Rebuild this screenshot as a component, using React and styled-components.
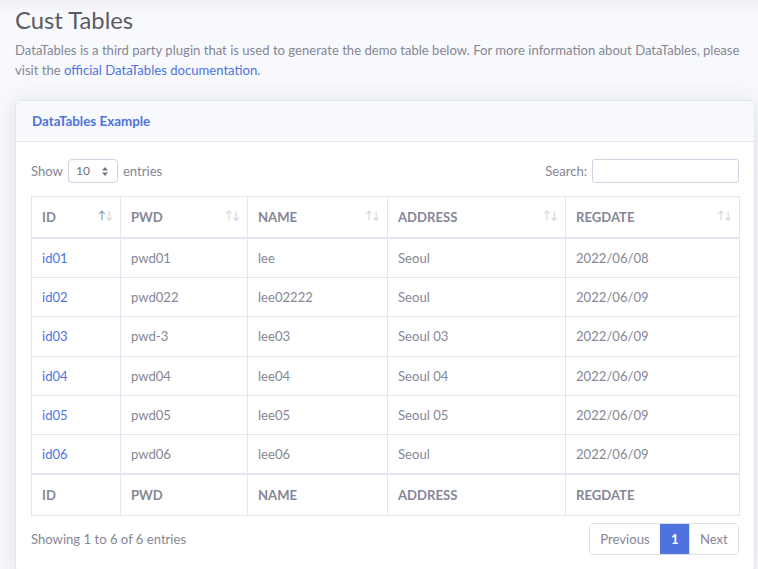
import styled, { createGlobalStyle } from "styled-components";

const GlobalStyle = createGlobalStyle`
    html, body {
        margin: 0;
        padding: 0;
        background: #f8f9fc;
    }
    body {
        font-family: Lato, 'Noto Sans', sans-serif;
        font-size: 13.1px;
        line-height: 20.4px;
        color: #858796;
    }
`;

const Page = styled.div`
    min-height: 569px;
    padding: 0 3px 0 15px;
    box-sizing: border-box;
    background: linear-gradient(to bottom, #eeeff4 0px, #f8f9fc 14px);
`;

const Title = styled.h1`
    margin: 0 0 5px;
    padding-top: 6px;
    font-size: 23.8px;
    font-weight: 400;
    line-height: 1.2;
    color: #5a5c69;
`;

const Intro = styled.p`
    margin: 0 0 20px;
    line-height: 20.4px;

    a {
        color: #4e73df;
        text-decoration: none;
    }
`;

const Card = styled.div`
    background: #fff;
    border: 1px solid #e3e6f0;
    border-radius: 6px;
    box-shadow: 0 2px 24px 0 rgba(58, 59, 69, 0.12);
    overflow: hidden;
`;

const CardHeader = styled.div`
    padding: 9.8px 16px;
    background: #f8f9fc;
    border-bottom: 1px solid #e3e6f0;

    h6 {
        margin: 0;
        font-size: 13.4px;
        line-height: 20.4px;
        font-weight: 700;
        color: #4e73df;
    }
`;

const CardBody = styled.div`
    padding: 17px 15px;
`;

const Controls = styled.div`
    display: flex;
    justify-content: space-between;
    align-items: center;
    margin-bottom: 13px;
`;

const Label = styled.label`
    display: flex;
    align-items: center;
    gap: 5px;
`;

const SelectBox = styled.div`
    display: flex;
    align-items: center;
    justify-content: space-between;
    width: 50px;
    height: 24px;
    padding: 0 9px 0 7px;
    box-sizing: border-box;
    border: 1px solid #d1d3e2;
    border-radius: 4px;
    background: #fff;
    color: #6e707e;
    font-size: 12px;
`;

const SearchInput = styled.input`
    width: 147px;
    height: 24px;
    box-sizing: border-box;
    border: 1px solid #d1d3e2;
    border-radius: 3px;
    outline: none;
`;

const Table = styled.table`
    width: 708px;
    border-collapse: collapse;
    table-layout: fixed;
    border: 1px solid #e3e6f0;
`;

const Th = styled.th`
    position: relative;
    text-align: left;
    padding: 9.5px 10px;
    font-weight: 700;
    line-height: 20.4px;
    color: #858796;
    border: 1px solid #e3e6f0;
    border-bottom-width: ${(p) => (p.foot ? "1px" : "2px")};
    border-top-width: ${(p) => (p.foot ? "2px" : "1px")};
`;

const Sorter = styled.span`
    position: absolute;
    right: 8px;
    top: 8px;
    font-size: 11px;
    font-weight: 400;
    letter-spacing: -1px;
    color: #cdd0da;

    b {
        font-weight: 400;
        color: ${(p) => (p.asc ? "#7a8093" : "#cdd0da")};
    }
`;

const Td = styled.td`
    padding: 8.95px 10px;
    line-height: 20.4px;
    border: 1px solid #e3e6f0;
    color: ${(p) => (p.link ? "#4e73df" : "#858796")};
`;

const Footer = styled.div`
    display: flex;
    justify-content: space-between;
    align-items: center;
    margin-top: 7px;
`;

const Pager = styled.div`
    display: flex;
    border: 1px solid #dddfeb;
    border-radius: 5px;
    overflow: hidden;
`;

const PageButton = styled.span`
    padding: 4.8px 10.2px;
    line-height: 20.4px;
    background: ${(p) => (p.active ? "#4e73df" : "#fff")};
    color: ${(p) => (p.active ? "#fff" : "#858796")};
    font-weight: ${(p) => (p.active ? 700 : 400)};
    border-left: ${(p) => (p.first ? "none" : "1px solid #dddfeb")};
    border-color: ${(p) => (p.active ? "#4e73df" : "#dddfeb")};
`;

const columns = ["ID", "PWD", "NAME", "ADDRESS", "REGDATE"];
const widths = [89, 127, 140, 178, 174];

const rows = [
    ["id01", "pwd01", "lee", "Seoul", "2022/06/08"],
    ["id02", "pwd022", "lee02222", "Seoul", "2022/06/09"],
    ["id03", "pwd-3", "lee03", "Seoul 03", "2022/06/09"],
    ["id04", "pwd04", "lee04", "Seoul 04", "2022/06/09"],
    ["id05", "pwd05", "lee05", "Seoul 05", "2022/06/09"],
    ["id06", "pwd06", "lee06", "Seoul", "2022/06/09"],
];

const App = () => {
    return (
        <Page>
            <GlobalStyle />
            <Title>Cust Tables</Title>
            <Intro>
                DataTables is a third party plugin that is used to generate the demo table below. For more
                information about DataTables, please visit the <a href="#">official DataTables documentation</a>.
            </Intro>

            <Card>
                <CardHeader>
                    <h6>DataTables Example</h6>
                </CardHeader>
                <CardBody>
                    <Controls>
                        <Label>
                            Show
                            <SelectBox>
                                <span>10</span>
                                <svg width="6" height="9" viewBox="0 0 6 9">
                                    <path d="M3 0 L6 3.5 H0 Z M3 9 L0 5.5 H6 Z" fill="#6e707e" />
                                </svg>
                            </SelectBox>
                            entries
                        </Label>
                        <Label>
                            Search:
                            <SearchInput type="search" />
                        </Label>
                    </Controls>

                    <Table>
                        <colgroup>
                            {widths.map((w, i) => (
                                <col key={i} style={{ width: w }} />
                            ))}
                        </colgroup>
                        <thead>
                            <tr>
                                {columns.map((c, i) => (
                                    <Th key={c}>
                                        {c}
                                        <Sorter asc={i === 0}>
                                            <b>↑</b>↓
                                        </Sorter>
                                    </Th>
                                ))}
                            </tr>
                        </thead>
                        <tbody>
                            {rows.map((r) => (
                                <tr key={r[0]}>
                                    {r.map((v, i) => (
                                        <Td key={i} link={i === 0}>
                                            {v}
                                        </Td>
                                    ))}
                                </tr>
                            ))}
                        </tbody>
                        <tfoot>
                            <tr>
                                {columns.map((c) => (
                                    <Th key={c} foot>
                                        {c}
                                    </Th>
                                ))}
                            </tr>
                        </tfoot>
                    </Table>

                    <Footer>
                        <span>Showing 1 to 6 of 6 entries</span>
                        <Pager>
                            <PageButton first>Previous</PageButton>
                            <PageButton active>1</PageButton>
                            <PageButton>Next</PageButton>
                        </Pager>
                    </Footer>
                </CardBody>
            </Card>
        </Page>
    );
};

export default App;
